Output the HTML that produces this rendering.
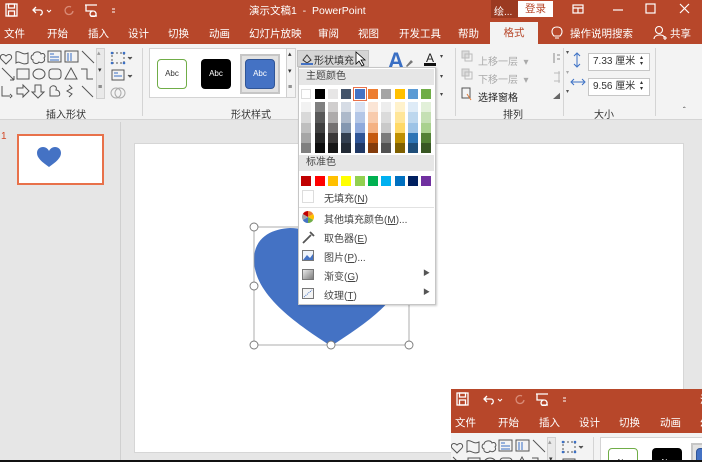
<!DOCTYPE html>
<html style="overflow:hidden;width:702px;height:462px"><head><meta charset="utf-8"><style>
*{margin:0;padding:0;box-sizing:border-box}
html{overflow:hidden}
body{width:702px;height:462px;overflow:hidden;position:relative;background:#e6e6e6;font-family:"Liberation Sans","Noto Sans CJK SC",sans-serif;font-size:10px;color:#333}
svg{display:block}
.a{position:absolute;white-space:nowrap}
.hdr{position:absolute;left:0;top:0;width:702px;height:122px;overflow:hidden}
.red{position:absolute;left:0;top:0;width:702px;height:44px;background:#b7472a}
.w{color:#fff}
.rib{position:absolute;left:0;top:44px;width:702px;height:76px;background:#f3f3f3;border-bottom:1px solid #d4d4d4}
.sep{position:absolute;width:1px;background:#d4d4d4}
.sw{position:absolute;width:10px;height:10px}
</style></head><body>

<div class="hdr" id="h1">
 <div class="red"></div>
 <svg class="a" style="left:5px;top:3px" width="120" height="14" viewBox="0 0 120 14" fill="none" stroke="#fff" stroke-width="1.3">
  <rect x="1" y="1" width="11" height="12"/><rect x="3.5" y="1" width="6" height="4"/><rect x="3.5" y="8" width="6" height="5"/>
  <path d="M31 4 L28 7 L31 10 M28 7 H35 C38 7 38 12 35 12"/><path d="M42 7 l2 2 l2-2" stroke-width="1"/>
  <path d="M66 4 A4 4 0 1 0 68 8" stroke="#d98b77"/>
  <path d="M80 2 H92 M81 2 V8 H88 M88 8 A3 3 0 1 0 88.1 8 M86 13 H92"/>
  <path d="M107 6 h3 M107 9 h3" stroke-width="1"/>
 </svg>
 <div class="a w" style="left:249px;top:3px;font-size:10.5px">演示文稿1 &nbsp;- &nbsp;PowerPoint</div>
 <div class="a" style="left:491px;top:0;width:27px;height:18px;background:#9b3a21"></div>
 <div class="a w" style="left:494px;top:3px">绘...</div>
 <div class="a" style="left:518px;top:1px;width:35px;height:16px;background:#fff;color:#b7472a;text-align:center;line-height:16px;font-size:10.5px">登录</div>
 <svg class="a" style="left:570px;top:2px" width="130" height="14" fill="none" stroke="#fff" stroke-width="1.2">
  <rect x="3" y="3" width="10" height="8"/><path d="M3 6 H13 M8 6 V11"/>
  <path d="M43 8 H53"/><rect x="76" y="2" width="9" height="9"/><path d="M110 2 L119 11 M119 2 L110 11"/>
 </svg>
 <div class="a w" style="left:4px;top:26px;font-size:10.5px">文件</div>
 <div class="a w" style="left:47px;top:26px;font-size:10.5px">开始</div>
 <div class="a w" style="left:88px;top:26px;font-size:10.5px">插入</div>
 <div class="a w" style="left:128px;top:26px;font-size:10.5px">设计</div>
 <div class="a w" style="left:168px;top:26px;font-size:10.5px">切换</div>
 <div class="a w" style="left:209px;top:26px;font-size:10.5px">动画</div>
 <div class="a w" style="left:249px;top:26px;font-size:10.5px">幻灯片放映</div>
 <div class="a w" style="left:318px;top:26px;font-size:10.5px">审阅</div>
 <div class="a w" style="left:358px;top:26px;font-size:10.5px">视图</div>
 <div class="a w" style="left:399px;top:26px;font-size:10.5px">开发工具</div>
 <div class="a w" style="left:458px;top:26px;font-size:10.5px">帮助</div>
 <div class="a" style="left:490px;top:22px;width:48px;height:22px;background:#f3f3f3;color:#b7472a;text-align:center;line-height:22px;font-size:10.5px">格式</div>
 <svg class="a" style="left:550px;top:25px" width="14" height="16" fill="none" stroke="#fff" stroke-width="1.1"><path d="M4 11 C1 8 1 2 7 2 C13 2 13 8 10 11 Z M5 13 H9"/></svg>
 <div class="a w" style="left:570px;top:26px;font-size:10.5px">操作说明搜索</div>
 <svg class="a" style="left:653px;top:25px" width="14" height="16" fill="none" stroke="#fff" stroke-width="1.1"><circle cx="6" cy="5" r="3.5"/><path d="M1 14 C1 9 11 9 11 12 M10 13 h4 M12 11 v4"/></svg>
 <div class="a w" style="left:670px;top:26px;font-size:10.5px">共享</div>

 <div class="rib">
  <svg class="a" style="left:0;top:4px" width="96" height="56" fill="none" stroke="#555" stroke-width="1">
   <path d="M6 8 C2 4 -2 9 2 12 L6 16 L10 12 C14 9 10 4 6 8Z"/>
   <path d="M16 4 C20 2 22 8 28 5 V15 C22 18 20 12 16 15 Z"/>
   <path d="M33 7 C34 3 40 3 41 6 C44 4 46 8 44 10 C46 13 42 16 39 14 C37 17 32 15 33 12 C30 11 31 7 33 7Z"/>
   <rect x="48" y="3" width="13" height="11"/><path d="M50 6 h4 M50 9 h9 M50 12 h9" stroke="#3a6fc4"/>
   <rect x="65" y="3" width="13" height="11"/><path d="M68 5 v8 M71 5 v8" stroke="#3a6fc4"/>
   <path d="M82 3 L94 15"/>
   <path d="M2 20 L14 32 M14 32 l-4 0 M14 32 l0-4"/>
   <rect x="17" y="21" width="12" height="10"/><ellipse cx="39" cy="26" rx="6" ry="5"/><rect x="49" y="21" width="12" height="10" rx="3"/>
   <path d="M71 20 L77 31 H65 Z"/><path d="M81 21 H87 V31 H93"/>
   <path d="M2 38 V48 H10 M10 46 l2 2 -2 2"/>
   <path d="M17 40 H23 V37 L29 43 L23 49 V46 H17 Z"/>
   <path d="M35 37 V44 H32 L38 50 L44 44 H41 V37 Z"/>
   <path d="M50 48 V40 C52 36 58 38 56 42 C60 42 61 48 58 48 Z"/>
   <path d="M69 37 L72 40 L67 43 L72 46 L69 49"/>
   <path d="M82 38 L93 49"/>
  </svg>
  <div class="a" style="left:96px;top:4px;width:9px;height:51px;background:#e9e9e9;border:1px solid #d0d0d0"></div>
  <div class="a" style="left:97px;top:5px;font-size:7px;color:#999">▴</div>
  <div class="a" style="left:98px;top:22px;font-size:7px">▾</div>
  <div class="a" style="left:98px;top:40px;font-size:7px">≡</div>
  <svg class="a" style="left:108px;top:6px" width="30" height="54" fill="none" stroke="#555" stroke-width="1">
   <rect x="4" y="3" width="12" height="10" stroke-dasharray="2 2"/><circle cx="4" cy="3" r="1.3" fill="#3a6fc4" stroke="none"/><circle cx="16" cy="13" r="1.3" fill="#3a6fc4" stroke="none"/><circle cx="4" cy="13" r="1.3" fill="#3a6fc4" stroke="none"/><circle cx="16" cy="3" r="1.3" fill="#3a6fc4" stroke="none"/>
   <path d="M20 7 l2 2 2-2" fill="#555"/>
   <rect x="4" y="20" width="12" height="10"/><path d="M6 23h4 M6 26h8" stroke="#3a6fc4"/><path d="M20 25 l2 2 2-2" fill="#555"/>
   <circle cx="8" cy="43" r="5" stroke="#aaa"/><circle cx="12" cy="43" r="5" stroke="#aaa"/>
  </svg>
  <div class="a" style="left:46px;top:62px">插入形状</div>
  <div class="sep" style="left:142px;top:4px;height:68px"></div>

  <div class="a" style="left:149px;top:4px;width:139px;height:50px;background:#fff;border:1px solid #d4d4d4"></div>
  <div class="a" style="left:157px;top:15px;width:30px;height:30px;border:1px solid #70ad47;border-radius:4px;background:#fff;font-size:8px;text-align:center;line-height:28px">Abc</div>
  <div class="a" style="left:201px;top:15px;width:30px;height:30px;border-radius:4px;background:#000;color:#fff;font-size:8px;text-align:center;line-height:30px">Abc</div>
  <div class="a" style="left:240px;top:10px;width:40px;height:40px;border:2px solid #c6c6c6;background:#e2e2e2"></div>
  <div class="a" style="left:245px;top:15px;width:30px;height:30px;border:1px solid #2f5597;border-radius:4px;background:#4472c4;color:#fff;font-size:8px;text-align:center;line-height:28px">Abc</div>
  <div class="a" style="left:286px;top:4px;width:10px;height:50px;background:#f3f3f3;border:1px solid #d0d0d0"></div>
  <div class="a" style="left:288px;top:6px;font-size:7px">▴</div>
  <div class="a" style="left:288px;top:23px;font-size:7px">▾</div>
  <div class="a" style="left:288px;top:40px;font-size:7px">≡</div>
  <div class="a" style="left:231px;top:62px">形状样式</div>

  <svg class="a" style="left:386px;top:2px" width="60" height="50">
   <text x="2" y="22" font-family="Liberation Sans" font-weight="bold" font-size="22" fill="#3a6fc4">A</text>
   <path d="M20 20 l5-6 2 2 -6 5z" fill="#777"/>
   <text x="40" y="16" font-family="Liberation Sans" font-size="12" fill="#222">A</text>
   <rect x="38" y="17" width="12" height="3" fill="#111"/>
   <text x="54" y="12" font-size="6" fill="#444">▾</text>
   <text x="54" y="32" font-size="6" fill="#444">▾</text>
   <text x="54" y="50" font-size="6" fill="#444">▾</text>
  </svg>
  <div class="sep" style="left:455px;top:4px;height:68px"></div>
  <svg class="a" style="left:460px;top:5px" width="100" height="60" fill="none" stroke="#bbb">
   <rect x="2" y="2" width="7" height="7" fill="#ddd"/><rect x="5" y="5" width="7" height="7"/>
   <rect x="2" y="20" width="7" height="7" fill="#ddd"/><rect x="5" y="23" width="7" height="7"/>
   <rect x="2" y="39" width="8" height="10" stroke="#555"/><path d="M7 45 l4 6" stroke="#e07b39"/>
   <path d="M94 4 v10 M97 6 h4 M97 10 h6" stroke="#888"/>
   <path d="M94 24 h10 M94 32 h10 M99 22 v12" stroke="#bbb"/>
   <path d="M93 50 L102 42 V50Z" fill="#666" stroke="none"/>
  </svg>
  <div class="a" style="left:478px;top:9px;color:#aaa">上移一层 &nbsp;▾</div>
  <div class="a" style="left:478px;top:27px;color:#aaa">下移一层 &nbsp;▾</div>
  <div class="a" style="left:478px;top:45px;color:#222">选择窗格</div>
  <div class="a" style="left:566px;top:5px;font-size:6px;color:#555">▾</div>
  <div class="a" style="left:566px;top:25px;font-size:6px;color:#aaa">▾</div>
  <div class="a" style="left:566px;top:44px;font-size:6px;color:#555">▾</div>
  <div class="a" style="left:503px;top:62px">排列</div>
  <div class="sep" style="left:563px;top:4px;height:68px"></div>
  <svg class="a" style="left:570px;top:8px" width="16" height="44" fill="none" stroke="#3a6fc4"><path d="M7 2 V14 M4 4 l3-3 3 3 M4 12 l3 3 3-3"/><path d="M2 30 H14 M4 27 l-3 3 3 3 M12 27 l3 3 -3 3"/></svg>
  <div class="a" style="left:588px;top:9px;width:62px;height:18px;background:#fff;border:1px solid #c6c6c6;padding-left:4px;line-height:16px">7.33 厘米</div>
  <div class="a" style="left:640px;top:11px;font-size:6px;line-height:6px">▴<br>▾</div>
  <div class="a" style="left:588px;top:34px;width:62px;height:18px;background:#fff;border:1px solid #c6c6c6;padding-left:4px;line-height:16px">9.56 厘米</div>
  <div class="a" style="left:640px;top:36px;font-size:6px;line-height:6px">▴<br>▾</div>
  <div class="a" style="left:594px;top:62px">大小</div>
  <div class="sep" style="left:655px;top:4px;height:68px"></div>
  <div class="a" style="left:683px;top:62px;font-size:8px">ˆ</div>
 </div>
</div>

<div class="a" style="left:120px;top:122px;width:1px;height:340px;background:#d0d0d0"></div>
<div class="a" style="left:1px;top:131px;color:#d24726;font-size:10px">1</div>
<div class="a" style="left:17px;top:134px;width:87px;height:51px;border:2px solid #e8714a;background:#fff"></div>
<svg class="a" style="left:36px;top:147px" width="26" height="22"><path d="M13 20 C6 15 1 11 1 6 C1 2 4 0 7 0 C10 0 12 2 13 4 C14 2 16 0 19 0 C22 0 25 2 25 6 C25 11 20 15 13 20Z" fill="#4472c4"/></svg>
<div class="a" style="left:134px;top:143px;width:550px;height:310px;background:#fff;border:1px solid #d6d6d6"></div>
<svg class="a" style="left:0;top:0" width="702" height="462">
 <path d="M331 346 C300 326 256 297 254 262 C253 237 272 229 290 228 C310 228 325 240 331 255 C337 240 352 228 372 228 C387 228 409 236 408 262 C407 297 362 326 331 346Z" fill="#4472c4"/>
 <rect x="254" y="227" width="155" height="118" fill="none" stroke="#999" stroke-width="0.8"/>
 <g fill="#fff" stroke="#777" stroke-width="0.9">
  <circle cx="254" cy="227" r="4"/><circle cx="254" cy="286" r="4"/><circle cx="254" cy="345" r="4"/><circle cx="331" cy="345" r="4"/><circle cx="409" cy="345" r="4"/>
 </g>
</svg>

<div class="a" style="left:297px;top:50px;width:72px;height:17px;background:#d5d5d5;border:1px solid #c0c0c0"></div>
<svg class="a" style="left:300px;top:52px" width="14" height="13" fill="none" stroke="#333"><path d="M3 8 L7 3 L11 8 L7 11Z"/><path d="M1 12 H13" stroke="#4472c4" stroke-width="2"/></svg>
<div class="a" style="left:314px;top:52px">形状填充</div>
<svg class="a" style="left:355px;top:51px" width="12" height="16"><path d="M1 1 V13 L4 10 L7 15 L9 14 L6 9 H10Z" fill="#fff" stroke="#000" stroke-width="0.8"/></svg>
<div class="a" style="left:298px;top:67px;width:138px;height:238px;background:#fff;border:1px solid #c6c6c6;box-shadow:1px 1px 2px rgba(0,0,0,.2)"></div>
<div class="a" style="left:299px;top:69px;width:135px;height:16px;background:#e6e6e6;padding-left:7px;line-height:16px;color:#444">主题颜色</div>
<div class="a" style="left:299px;top:155px;width:135px;height:16px;background:#e6e6e6;padding-left:7px;line-height:16px;color:#444">标准色</div>
<div id="sw"></div>
<div class="a" style="left:302px;top:190px;width:12px;height:13px;border:1px solid #ddd;background:#fff"></div>
<div class="a" style="left:324px;top:190px;color:#444">无填充(<u>N</u>)</div>
<div class="a" style="left:299px;top:207px;width:135px;height:1px;background:#e2e2e2"></div>
<svg class="a" style="left:301px;top:210px" width="14" height="92">
 <g transform="translate(7,7)"><path d="M0 0 L0 -6 A6 6 0 0 1 5.2 -3Z" fill="#ed7d31"/><path d="M0 0 L5.2 -3 A6 6 0 0 1 5.2 3Z" fill="#ffc000"/><path d="M0 0 L5.2 3 A6 6 0 0 1 0 6Z" fill="#70ad47"/><path d="M0 0 L0 6 A6 6 0 0 1 -5.2 3Z" fill="#4472c4"/><path d="M0 0 L-5.2 3 A6 6 0 0 1 -5.2 -3Z" fill="#a5a5a5"/><path d="M0 0 L-5.2 -3 A6 6 0 0 1 0 -6Z" fill="#c00000"/></g>
 <path d="M2 33 L10 25 M9 22 L13 26" stroke="#555" stroke-width="1.8"/>
 <rect x="1.5" y="40.5" width="11" height="10" fill="#eef3fa" stroke="#777"/><path d="M2 50 L6 45 L9 48 L12 44 V50Z" fill="#4472c4"/>
 <defs><linearGradient id="g" x1="0" y1="0" x2="1" y2="1"><stop offset="0" stop-color="#eee"/><stop offset="1" stop-color="#777"/></linearGradient></defs>
 <rect x="1.5" y="59.5" width="11" height="10" fill="url(#g)" stroke="#777"/>
 <rect x="1.5" y="78.5" width="11" height="10" fill="#f4f4f4" stroke="#777"/><path d="M3 87 L11 80" stroke="#4472c4" stroke-dasharray="1 1"/>
</svg>
<div class="a" style="left:324px;top:211px;color:#444">其他填充颜色(<u>M</u>)...</div>
<div class="a" style="left:324px;top:230px;color:#444">取色器(<u>E</u>)</div>
<div class="a" style="left:324px;top:249px;color:#444">图片(<u>P</u>)...</div>
<div class="a" style="left:324px;top:268px;color:#444">渐变(<u>G</u>)</div>
<div class="a" style="left:324px;top:287px;color:#444">纹理(<u>T</u>)</div>
<div class="a" style="left:423px;top:268px;font-size:7px;color:#555">▶</div>
<div class="a" style="left:423px;top:287px;font-size:7px;color:#555">▶</div>

<div class="a" style="left:451px;top:389px;width:251px;height:71px;overflow:hidden" id="inset"></div>
<div class="a" style="left:0;top:460px;width:702px;height:2px;background:#111"></div>

<script>
var xs=[301,315,328,341,355,368,381,395,408,421];
var theme=["ffffff","000000","e7e6e6","44546a","4472c4","ed7d31","a5a5a5","ffc000","5b9bd5","70ad47"];
var sh=[["f2f2f2","d9d9d9","bfbfbf","a6a6a6","808080"],["808080","595959","404040","262626","0d0d0d"],["d0cece","aeabab","757171","3b3838","171616"],["d6dce5","adb9ca","8497b0","333f50","222a35"],["dae3f3","b4c7e7","8faadc","2f5597","203864"],["fbe5d6","f8cbad","f4b183","c55a11","843c0c"],["ededed","dbdbdb","c9c9c9","7b7b7b","525252"],["fff2cc","ffe699","ffd966","bf9000","7f6000"],["deebf7","bdd7ee","9dc3e6","2e75b6","1f4e79"],["e2f0d9","c5e0b4","a9d18e","538135","385723"]];
var std=["c00000","ff0000","ffc000","ffff00","92d050","00b050","00b0f0","0070c0","002060","7030a0"];
var h="";
for(var i=0;i<10;i++){
 h+='<div class="sw" style="left:'+xs[i]+'px;top:89px;background:#'+theme[i]+';'+(i==0?'border:1px solid #ddd;':'')+(i==4?'outline:1px solid #e8714a;outline-offset:1px;':'')+'"></div>';
 for(var j=0;j<5;j++)h+='<div class="sw" style="left:'+xs[i]+'px;top:'+(102+j*10.3)+'px;height:10.3px;background:#'+sh[i][j]+'"></div>';
 h+='<div class="sw" style="left:'+xs[i]+'px;top:176px;background:#'+std[i]+'"></div>';
}
document.getElementById("sw").innerHTML=h;
document.getElementById("inset").innerHTML=document.getElementById("h1").outerHTML.replace('id="h1"','');
</script>
</body></html>
